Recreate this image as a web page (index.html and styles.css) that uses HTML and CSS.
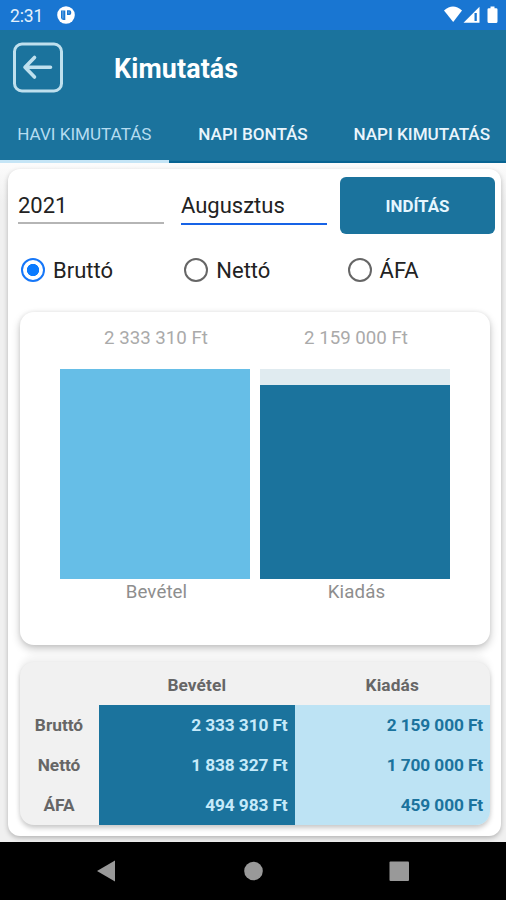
FILE: index.html
```html
<!DOCTYPE html>
<html lang="hu">
<head>
<meta charset="utf-8">
<title>Kimutatás</title>
<link rel="stylesheet" href="styles.css">
</head>
<body>
<div class="status">
  <span class="clock">2:31</span>
  <svg class="app-dot" width="18" height="18" viewBox="0 0 18 18"><circle cx="9" cy="9" r="8.800" fill="#fff"/><path d="M4 4.500h4.300v9.500H6.400A2.400 2.400 0 0 1 4 11.600z" fill="#1976d2"/><path d="M10 4.300h2.500a1.800 1.800 0 0 1 1.700 1.800v1.100A1.800 1.800 0 0 1 12.500 9H10z" fill="#1976d2"/><path d="M5.900 5v7.500M11.900 5.500v2" stroke="#8fc0ee" stroke-width=".8"/></svg>
  <svg class="signals" width="56" height="18" viewBox="0 0 56 18"><path d="M0 4.500Q9-3.500 18 4.500L9.200 16z" fill="#fff"/><path d="M19.500 16.700 35.500.800v15.900z" fill="#fff"/><path d="M30.500 7h2.300v8h-2.300z" fill="#1976d2"/><path d="M46.500.500h4v1.700h1.700q1.300 0 1.300 1.300v12q0 1.500-1.500 1.500h-7q-1.500 0-1.500-1.500v-12q0-1.300 1.300-1.300h1.700z" fill="#fff"/></svg>
</div>
<header class="header">
  <div class="title-row">
    <svg class="back" width="52" height="52" viewBox="0 0 52 52" fill="none" stroke="#bfe0ee" stroke-linecap="round" stroke-linejoin="round"><rect x="2.500" y="2" width="47" height="47" rx="7.500" stroke-width="3"/><path d="M38.500 25.300H13M22.500 15.500 13 25.300 22.500 35" stroke-width="3.600"/></svg>
    <h1>Kimutatás</h1>
  </div>
  <nav class="tabs">
    <span class="tab active">HAVI KIMUTATÁS</span>
    <span class="tab">NAPI BONTÁS</span>
    <span class="tab">NAPI KIMUTATÁS</span>
  </nav>
</header>
<main class="main">
  <section class="panel">
    <div class="form">
      <div class="field year">2021</div>
      <div class="field month">Augusztus</div>
      <button class="start">INDÍTÁS</button>
    </div>
    <div class="radios">
      <span class="radio on"><i></i>Bruttó</span>
      <span class="radio"><i></i>Nettó</span>
      <span class="radio"><i></i>ÁFA</span>
    </div>
    <div class="chart">
      <div class="column"><span class="value">2 333 310 Ft</span><div class="bar income"></div><span class="name">Bevétel</span></div>
      <div class="column"><span class="value">2 159 000 Ft</span><div class="bar expense"><div class="fill"></div></div><span class="name">Kiadás</span></div>
    </div>
    <div class="table">
      <span></span><span class="th">Bevétel</span><span class="th">Kiadás</span>
      <span class="label">Bruttó</span><span class="in">2 333 310 Ft</span><span class="out">2 159 000 Ft</span>
      <span class="label">Nettó</span><span class="in">1 838 327 Ft</span><span class="out">1 700 000 Ft</span>
      <span class="label">ÁFA</span><span class="in">494 983 Ft</span><span class="out">459 000 Ft</span>
    </div>
  </section>
</main>
<footer class="navbar">
  <svg width="506" height="58" viewBox="0 0 506 58" fill="#999"><path d="M97 29 115 18.500v21z"/><circle cx="253.500" cy="29" r="9.300"/><rect x="389.500" y="19.500" width="19.500" height="19.500" rx="1"/></svg>
</footer>
</body>
</html>
```
FILE: styles.css
```css
* { box-sizing: border-box; }
body {
  margin: 0;
  width: 506px;
  height: 900px;
  overflow: hidden;
  display: flex;
  flex-direction: column;
  font-family: Roboto, "Liberation Sans", sans-serif;
  background: #fff;
}
.status {
  height: 30px;
  flex: none;
  display: flex;
  align-items: center;
  padding: 1px 8px 0 10px;
  background: #1976d2;
  color: #e4f1fc;
}
.clock { width: 47px; font-size: 17.500px; line-height: 30px; letter-spacing: -0.1px; }
.app-dot { margin-top: -1px; }
.signals { margin: -1px -2px 0 auto; }
.header {
  height: 133px;
  flex: none;
  background: #1b739d;
}
.title-row { display: flex; align-items: center; height: 75px; padding-left: 12px; }
.back { flex: none; }
h1 { margin: 2px 0 0 50px; font-size: 26.800px; font-weight: 700; color: #fff; letter-spacing: 0.15px; }
.tabs { display: grid; grid-template-columns: repeat(3, 168.700px); height: 58px; }
.tab {
  height: 58px;
  text-align: center;
  font-size: 17.100px;
  line-height: 59px;
  font-weight: 500;
  white-space: nowrap;
  color: #eaf5fc;
  border-bottom: 2px solid #086492;
}
.tab.active { color: #b5dcf0; font-weight: 400; border-bottom: 3px solid #c5e5f6; }
.main {
  height: 679px;
  flex: none;
  padding: 6px 5px 6px 8px;
  background: linear-gradient(#fcfcfc, #f0f0f0 40px);
}
.panel {
  height: 667px;
  padding: 8px 6px 0 10px;
  border-radius: 12px;
  background: #fff;
  box-shadow: 0 2px 5px rgba(0, 0, 0, .25);
}
.form { display: flex; height: 57px; }
.field {
  width: 146px;
  height: 47px;
  font-size: 22px;
  line-height: 58px;
  color: #222;
  border-bottom: 2px solid #b5b5b5;
}
.year { margin-right: 17px; }
.month { height: 48px; margin-right: 13px; border-bottom-color: #1763e6; }
.start {
  width: 155px;
  height: 57px;
  padding: 0;
  border: 0;
  border-radius: 6px;
  background: #1b739d;
  color: #e5f6ff;
  font: 700 16.900px Roboto, sans-serif;
}
.radios { display: grid; grid-template-columns: repeat(3, 163.300px); height: 78px; padding-left: 3px; }
.radio { display: flex; align-items: center; height: 72px; font-size: 22px; color: #222; }
.radio i {
  width: 24px;
  height: 24px;
  margin-right: 8px;
  border: 2px solid #666;
  border-radius: 50%;
}
.radio.on i { border-color: #1677f8; background: radial-gradient(circle, #0b7bff 0 5.800px, #fff 6.500px); }
.chart {
  display: flex;
  gap: 10px;
  width: 470px;
  height: 333px;
  margin-left: 2px;
  padding: 13px 40px 0;
  border-radius: 14px;
  background: #fff;
  box-shadow: 0 4px 8px rgba(0, 0, 0, .22), 0 0 4px rgba(0, 0, 0, .08);
  position: relative;
}
.column { width: 190px; display: flex; flex-direction: column; align-items: center; }
.value { height: 43.500px; font-size: 18.700px; line-height: 27px; color: #aaa; padding-left: 2px; }
.bar { width: 190px; height: 210.500px; }
.income { background: #66bee7; }
.expense { padding-top: 16px; background: #e0ebf0; }
.fill { height: 100%; background: #1b739d; }
.name { font-size: 18.700px; line-height: 26px; letter-spacing: 0.1px; color: #8e8e8e; padding-left: 3px; }
.table {
  display: grid;
  grid-template-columns: 79px 195.500px 195.500px;
  grid-template-rows: 43px 40px 40px 40px;
  width: 470px;
  height: 163px;
  margin: 17px 0 0 2px;
  border-radius: 14px;
  overflow: hidden;
  background: #f1f1f1;
  color: #666;
  font-size: 17.300px;
  font-weight: 700;
  line-height: 40px;
  box-shadow: 0 3px 5px rgba(0, 0, 0, .22), 0 -6px 6px rgba(0, 0, 0, .05);
}
.th { text-align: center; line-height: 46px; letter-spacing: 0.1px; }
.label { text-align: center; padding-right: 1px; }
.in, .out { text-align: right; padding-right: 7px; letter-spacing: -0.12px; }
.in { background: #1b739d; color: #c6eafa; }
.out { background: #bde3f4; color: #1b739d; }
.navbar { height: 58px; flex: none; background: #000; }
.navbar svg { display: block; }
```
